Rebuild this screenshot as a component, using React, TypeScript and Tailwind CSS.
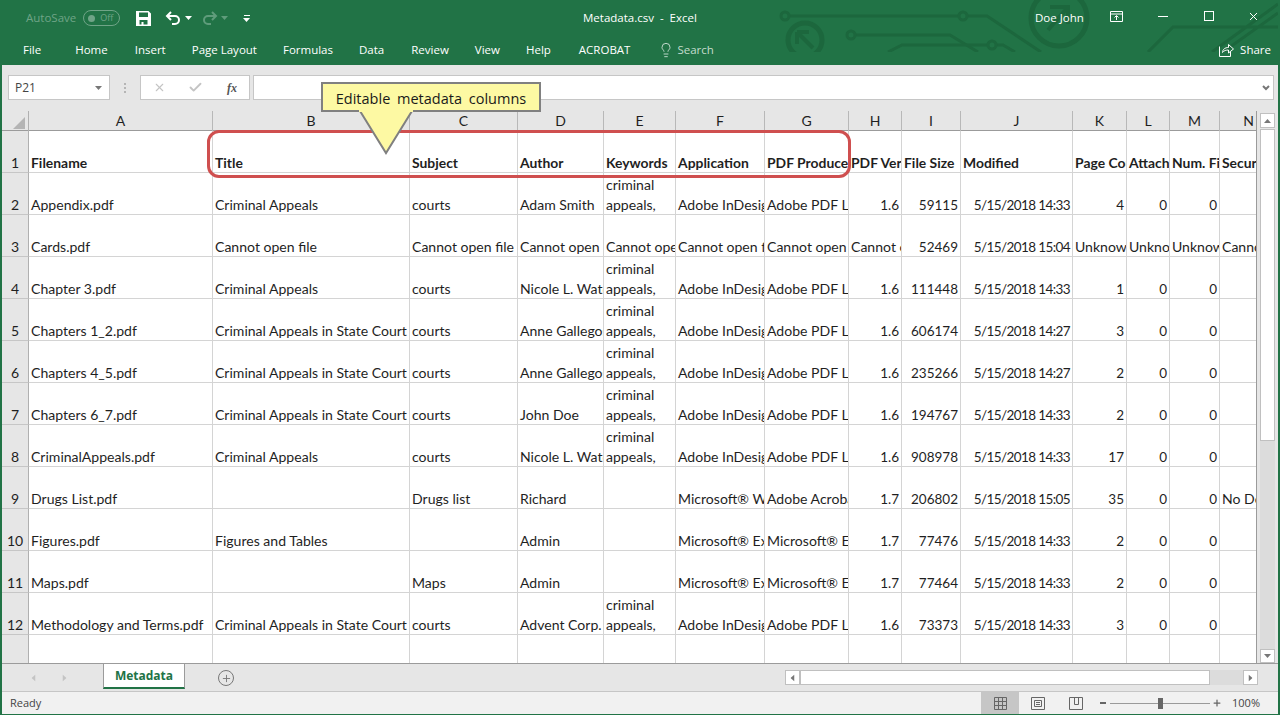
import { Lightbulb, Plus, X, Check } from "lucide-react";

const columns = ["A", "B", "C", "D", "E", "F", "G", "H", "I", "J", "K", "L", "M", "N"];

const headers = ["Filename", "Title", "Subject", "Author", "Keywords", "Application", "PDF Producer", "PDF Version", "File Size", "Modified", "Page Count", "Attachments", "Num. Files", "Security"];

const kw = "criminal appeals,";
const indesign = "Adobe InDesign";
const library = "Adobe PDF Library";
const cap = "Criminal Appeals in State Court";

const rows = [
  ["Appendix.pdf", "Criminal Appeals", "courts", "Adam Smith", kw, indesign, library, "1.6", "59115", "5/15/2018 14:33", "4", "0", "0", ""],
  ["Cards.pdf", "Cannot open file", "Cannot open file", "Cannot open file", "Cannot open file", "Cannot open file", "Cannot open file", "Cannot open file", "52469", "5/15/2018 15:04", "Unknown", "Unknown", "Unknown", "Cannot"],
  ["Chapter 3.pdf", "Criminal Appeals", "courts", "Nicole L. Waters", kw, indesign, library, "1.6", "111448", "5/15/2018 14:33", "1", "0", "0", ""],
  ["Chapters 1_2.pdf", cap, "courts", "Anne Gallegos", kw, indesign, library, "1.6", "606174", "5/15/2018 14:27", "3", "0", "0", ""],
  ["Chapters 4_5.pdf", cap, "courts", "Anne Gallegos", kw, indesign, library, "1.6", "235266", "5/15/2018 14:27", "2", "0", "0", ""],
  ["Chapters 6_7.pdf", cap, "courts", "John Doe", kw, indesign, library, "1.6", "194767", "5/15/2018 14:33", "2", "0", "0", ""],
  ["CriminalAppeals.pdf", "Criminal Appeals", "courts", "Nicole L. Waters", kw, indesign, library, "1.6", "908978", "5/15/2018 14:33", "17", "0", "0", ""],
  ["Drugs List.pdf", "", "Drugs list", "Richard", "", "Microsoft® Word", "Adobe Acrobat", "1.7", "206802", "5/15/2018 15:05", "35", "0", "0", "No Doc"],
  ["Figures.pdf", "Figures and Tables", "", "Admin", "", "Microsoft® Excel", "Microsoft® Excel", "1.7", "77476", "5/15/2018 14:33", "2", "0", "0", ""],
  ["Maps.pdf", "", "Maps", "Admin", "", "Microsoft® Excel", "Microsoft® Excel", "1.7", "77464", "5/15/2018 14:33", "2", "0", "0", ""],
  ["Methodology and Terms.pdf", cap, "courts", "Advent Corp.", kw, indesign, library, "1.6", "73373", "5/15/2018 14:33", "3", "0", "0", ""],
];

const gridCols = "grid grid-cols-[27px_184px_197px_108px_86px_72px_89px_84px_53px_59px_112px_54px_43px_50px_37px]";
const cellFont = "font-['Lato','Liberation_Sans',sans-serif] leading-[20px] text-[#1f1f1f]";

// numbers in these columns sit on the right edge of the cell
const isRight = (v: string, col: number) => col >= 7 && /^[\d./: ]+$/.test(v);

function Caret({ className }: { className: string }) {
  return (
    <svg width="7" height="4" viewBox="0 0 7 4" className={className}>
      <path d="M0 0h7L3.5 4z" fill="currentColor" />
    </svg>
  );
}

function Circuit() {
  return (
    <svg className="absolute left-0 top-0 pointer-events-none" width="1276" height="52" viewBox="0 0 1276 52" fill="none" stroke="#1c673d" strokeWidth="3">
      <path d="M787 16H957M965 16H985L1039 52" />
      <circle cx="783" cy="16" r="4" />
      <circle cx="961" cy="16" r="4" />
      <path d="M853 35H948L976 52" />
      <circle cx="849" cy="35" r="4" />
      <path d="M886 52L900 45H986M994 45H1001L1013 52" />
      <circle cx="990" cy="45" r="4" />
      <circle cx="803" cy="40" r="17" strokeWidth="5" />
      <path d="M795 32H807M795 32V44M795 32L811 48" strokeWidth="4" />
      <circle cx="1057" cy="18" r="28" strokeWidth="5" />
      <path d="M1048 7H1066V24M1066 7L1046 30" strokeWidth="4" />
      <path d="M1146 52L1171 27H1276M1210 52L1276 4M1221 52L1276 13" />
    </svg>
  );
}

function TitleBar() {
  return (
    <div className="relative h-[65px] shrink-0 bg-[#217346] text-white font-['Open_Sans','Liberation_Sans',sans-serif] text-[11.5px] overflow-hidden">
      <Circuit />
      <div className="relative h-[36px] flex items-center">
        <span className="ml-[24px] text-[#6fa487]">AutoSave</span>
        <div className="ml-[7px] w-[37px] h-[16px] rounded-full border border-[#6fa487] flex items-center pl-[4px] gap-[5px] text-[#6fa487] text-[9px]">
          <span className="w-[7px] h-[7px] rounded-full bg-[#6fa487]" />
          Off
        </div>
        <svg className="ml-[16px]" width="15" height="15" viewBox="0 0 15 15">
          <path fillRule="evenodd" d="M0 0h12.500L15 2.500V15H0zM3 1.500V6h9V1.500zM3.500 9v4.500h2V11h2v2.500h4V9z" fill="#fff" />
        </svg>
        <svg className="ml-[14px]" width="16" height="14" viewBox="0 0 16 14" fill="none" stroke="#fff" strokeWidth="2">
          <path d="M6 1L2 5l4 4M2 5h8a4 4 0 0 1 0 8H7" />
        </svg>
        <Caret className="ml-[4px] text-white" />
        <svg className="ml-[10px]" width="16" height="14" viewBox="0 0 16 14" fill="none" stroke="#5f9c7b" strokeWidth="2">
          <path d="M10 1l4 4-4 4M14 5H6a4 4 0 0 0 0 8h3" />
        </svg>
        <Caret className="ml-[3px] text-[#5f9c7b]" />
        <div className="ml-[15px] flex flex-col items-center gap-[2px]">
          <span className="w-[6px] h-px bg-white" />
          <Caret className="text-white" />
        </div>
        <span className="absolute left-[581px]">Metadata.csv&nbsp; -&nbsp; Excel</span>
        <span className="absolute left-[1033px]">Doe John</span>
        <svg className="absolute left-[1108px] top-[11px]" width="13" height="11" viewBox="0 0 13 11" fill="none" stroke="#fff">
          <path d="M.5.5h12v10H.5zM.5 3h12M6.500 9V5M4.500 6.500l2-2 2 2" />
        </svg>
        <span className="absolute left-[1156px] top-[16px] w-[10px] h-px bg-white" />
        <span className="absolute left-[1202px] top-[11px] w-[10px] h-[10px] border border-white" />
        <X className="absolute left-[1245px] top-[10px]" size={13} strokeWidth={1} absoluteStrokeWidth />
      </div>
      <div className="relative h-[29px] flex items-center pb-[2px]">
        <span className="ml-[21px]">File</span>
        <span className="ml-[34px]">Home</span>
        <span className="ml-[27px]">Insert</span>
        <span className="ml-[26px]">Page Layout</span>
        <span className="ml-[26px]">Formulas</span>
        <span className="ml-[26px]">Data</span>
        <span className="ml-[27px]">Review</span>
        <span className="ml-[26px]">View</span>
        <span className="ml-[26px]">Help</span>
        <span className="ml-[28px]">ACROBAT</span>
        <Lightbulb className="ml-[28px] text-[#e3efe8]" size={16} strokeWidth={1.2} />
        <span className="ml-[3px] text-[#c3dccd]">Search</span>
        <div className="ml-auto mr-[7px] flex items-center gap-[6px]">
          <svg width="15" height="14" viewBox="0 0 15 14" fill="none" stroke="#fff">
            <path d="M.5 3.500v10h11V9M3.500 9.500c0-3 2.500-5 6-5V1.500l5 4.500-5 4V7c-2.500 0-4.500.5-6 2.500z" />
          </svg>
          <span>Share</span>
        </div>
      </div>
    </div>
  );
}

function FormulaBar() {
  return (
    <div className="h-[46px] shrink-0 bg-[#e6e6e6] flex items-start pt-[10px] pl-[6px] pr-[4px] font-['Open_Sans','Liberation_Sans',sans-serif]">
      <div className="w-[102px] h-[25px] bg-white border border-[#c6c6c6] flex items-center justify-between pl-[6px] pr-[7px] text-[12px] text-[#444]">
        P21
        <Caret className="text-[#777]" />
      </div>
      <div className="w-[30px] h-[25px] flex flex-col items-center justify-center gap-[2px]">
        <span className="w-[2px] h-[2px] bg-[#b5b5b5]" />
        <span className="w-[2px] h-[2px] bg-[#b5b5b5]" />
        <span className="w-[2px] h-[2px] bg-[#b5b5b5]" />
      </div>
      <div className="w-[110px] h-[25px] bg-white border border-[#c6c6c6] flex items-center pl-[12px]">
        <X size={13} className="text-[#c4c4c4]" strokeWidth={2} />
        <Check size={15} className="ml-[22px] text-[#c4c4c4]" strokeWidth={3} />
        <span className="ml-[24px] font-['Liberation_Serif',serif] italic font-bold text-[12px] text-[#555]">fx</span>
      </div>
      <div className="ml-[3px] flex-1 h-[25px] bg-white border border-[#c6c6c6] flex items-center justify-end pr-[3px]">
        <svg width="8" height="6" viewBox="0 0 8 6" fill="none" stroke="#777" strokeWidth="2">
          <path d="M1 1l3 3 3-3" />
        </svg>
      </div>
    </div>
  );
}

function Cell({ v, col }: { v: string; col: number }) {
  const right = isRight(v, col);
  return (
    <div
      className={
        "border-r border-b border-[#d4d4d4] flex items-end px-[2px] overflow-hidden " + cellFont + " " +
        (right ? "justify-end whitespace-nowrap text-[13.5px] " : "text-[14.050px] ") +
        (col === 9 ? "tracking-[-0.6px] " : "") +
        (v === kw ? "whitespace-normal" : "whitespace-nowrap")
      }
    >
      <span className="translate-y-px">{v}</span>
    </div>
  );
}

function Sheet() {
  return (
    <div className="w-[1255px] shrink-0 bg-white overflow-hidden border-r border-[#9b9b9b]">
      <div className={gridCols + " h-[20px] bg-[#e6e6e6] border-b border-[#9b9b9b] text-[14px] " + cellFont}>
        <div className="border-r border-[#b0b0b0] flex items-end justify-end pr-[3px] pb-[2px]">
          <svg width="12" height="12" viewBox="0 0 12 12"><path d="M12 0v12H0z" fill="#b4b4b4" /></svg>
        </div>
        {columns.map((c) => (
          <div key={c} className={"border-r border-[#b8b8b8] flex items-center " + (c === "N" ? "justify-end pr-[2px]" : "justify-center")}>{c}</div>
        ))}
      </div>
      <div className={gridCols + " h-[42px]"}>
        <div className={"bg-[#e6e6e6] border-r border-b border-[#b0b0b0] border-b-[#c6c6c6] flex items-end justify-center text-[14px] " + cellFont}>
          <span className="translate-y-px">1</span>
        </div>
        {headers.map((h) => (
          <div key={h} className={"border-r border-b border-[#d4d4d4] flex items-end pl-[2px] overflow-hidden whitespace-nowrap font-bold text-[13.900px] " + cellFont}>
            <span className="translate-y-px">{h}</span>
          </div>
        ))}
      </div>
      {rows.map((row, i) => (
        <div key={row[0]} className={gridCols + " h-[42px]"}>
          <div className={"bg-[#e6e6e6] border-r border-b border-[#b0b0b0] border-b-[#c6c6c6] flex items-end justify-center text-[14px] " + cellFont}>
            <span className="translate-y-px">{i + 2}</span>
          </div>
          {row.map((v, j) => (
            <Cell key={j} v={v} col={j} />
          ))}
        </div>
      ))}
      <div className={gridCols + " h-[28px]"}>
        <div className="bg-[#e6e6e6] border-r border-[#b0b0b0]" />
        {columns.map((c) => (
          <div key={c} className="border-r border-[#d4d4d4]" />
        ))}
      </div>
    </div>
  );
}

function VScroll() {
  return (
    <div className="flex-1 bg-[#e6e6e6] pl-[3px] pr-[3px] pt-[2px] flex flex-col">
      <div className="h-[15px] bg-white border border-[#c0c0c0] flex items-center justify-center shrink-0">
        <Caret className="rotate-180 text-[#777]" />
      </div>
      <div className="h-[312px] mt-px bg-white border border-[#c0c0c0] shrink-0" />
      <div className="flex-1 bg-[#dcdcdc]" />
      <div className="h-[14px] bg-white border border-[#c0c0c0] flex items-center justify-center shrink-0">
        <Caret className="text-[#777]" />
      </div>
    </div>
  );
}

function TabBar() {
  return (
    <div className="h-[28px] shrink-0 bg-[#e6e6e6] border-t border-[#9b9b9b] flex font-['Open_Sans','Liberation_Sans',sans-serif]">
      <div className="w-[101px] flex items-center pl-[28px] gap-[24px] text-[#c4c4c4]">
        <Caret className="rotate-90" />
        <Caret className="-rotate-90" />
      </div>
      <div className="w-[82px] h-[25px] bg-white border-x border-[#9b9b9b] border-b-2 border-b-[#217346] flex items-center justify-center text-[12px] font-bold text-[#217346]">
        Metadata
      </div>
      <div className="ml-[33px] mt-[6px] w-[16px] h-[16px] rounded-full border border-[#777] flex items-center justify-center text-[#777]">
        <Plus size={11} strokeWidth={2} />
      </div>
      <div className="ml-auto mr-[20px] mt-[6px] w-[473px] h-[15px] flex">
        <div className="w-[15px] bg-white border border-[#c0c0c0] flex items-center justify-center">
          <Caret className="rotate-90 text-[#777]" />
        </div>
        <div className="w-[410px] bg-white border border-[#c0c0c0]" />
        <div className="flex-1 bg-[#dcdcdc]" />
        <div className="w-[15px] bg-white border border-[#c0c0c0] flex items-center justify-center">
          <Caret className="-rotate-90 text-[#777]" />
        </div>
      </div>
    </div>
  );
}

function StatusBar() {
  return (
    <div className="h-[23px] shrink-0 bg-[#f1f1f1] border-t border-[#c6c6c6] flex items-center text-[11px] text-[#444] font-['Open_Sans','Liberation_Sans',sans-serif]">
      <span className="ml-[8px]">Ready</span>
      <div className="ml-auto w-[38px] h-full bg-[#c6c6c6] flex items-center justify-center">
        <svg width="13" height="13" viewBox="0 0 13 13" fill="none" stroke="#666"><path d="M.5.5h12v12H.5zM4.500.5v12M8.500.5v12M.5 4.500h12M.5 8.500h12" /></svg>
      </div>
      <div className="w-[38px] flex justify-center">
        <svg width="14" height="13" viewBox="0 0 14 13" fill="none" stroke="#666"><path d="M.5.5h13v12H.5zM3.500 3.500h7v6h-7zM5 5.500h4M5 7.500h4" /></svg>
      </div>
      <div className="w-[38px] flex justify-center">
        <svg width="14" height="13" viewBox="0 0 14 13" fill="none" stroke="#666"><path d="M.5.5h13v12H.5zM5.500.5v7h4V.5" /></svg>
      </div>
      <span className="ml-[5px] w-[6px] h-[2px] bg-[#666]" />
      <div className="relative ml-[4px] w-[100px] h-px bg-[#9a9a9a]">
        <span className="absolute left-[48px] -top-[5px] w-[5px] h-[11px] bg-[#666]" />
      </div>
      <Plus className="ml-[2px] text-[#666]" size={10} strokeWidth={3} />
      <span className="ml-[10px] mr-[18px]">100%</span>
    </div>
  );
}

export default function App() {
  return (
    <div className="relative w-[1280px] h-[720px] bg-white overflow-hidden">
      <div className="h-[715px] flex flex-col border-x-2 border-b-2 border-[#217346]">
        <TitleBar />
        <FormulaBar />
        <div className="flex h-[552px] shrink-0">
          <Sheet />
          <VScroll />
        </div>
        <TabBar />
        <StatusBar />
      </div>

      {/* red outline around the editable columns */}
      <div className="absolute left-[207px] top-[130px] w-[644px] h-[48px] rounded-[12px] border-[3px] border-[#cf4f4f]" />

      {/* callout */}
      <svg className="absolute left-[355px] top-[108px]" width="62" height="50" viewBox="0 0 62 50">
        <path d="M5 3L31 45L57 3" fill="#fdf9a3" stroke="#808080" strokeWidth="2" />
        <path d="M6 0H56V4H6z" fill="#fdf9a3" />
      </svg>
      <div className="absolute left-[321px] top-[82px] w-[220px] h-[30px] bg-[#fdf9a3] border-2 border-[#808080] border-b-0 flex items-center justify-center pt-[2px] text-[14.500px] text-[#1a1a1a] font-['Open_Sans','Liberation_Sans',sans-serif] [word-spacing:3px]">
        Editable metadata columns
      </div>
      <div className="absolute left-[321px] top-[110px] w-[38px] h-[2px] bg-[#808080]" />
      <div className="absolute left-[413px] top-[110px] w-[128px] h-[2px] bg-[#808080]" />
    </div>
  );
}
